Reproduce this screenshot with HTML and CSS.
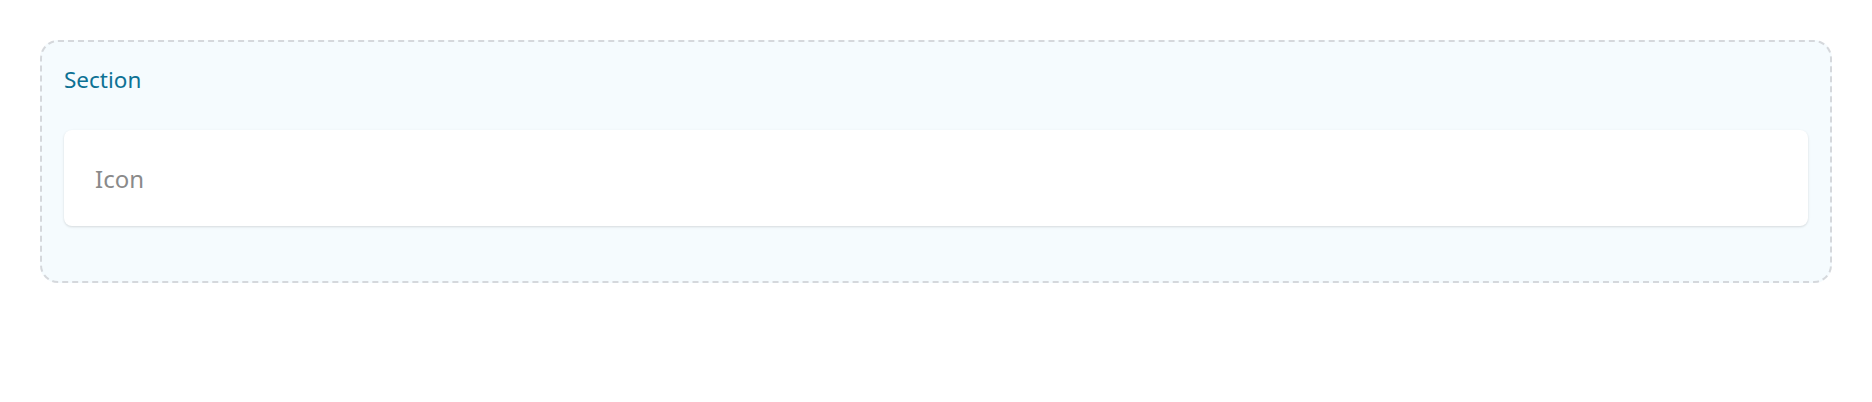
FILE: index.html
```html
<!DOCTYPE html>
<html>
<head>
<meta charset="utf-8">
<link rel="stylesheet" href="styles.css">
</head>
<body>
<div class="page">
  <section class="section">
    <div class="section-title">Section</div>
    <div class="card">
      <span class="card-label">Icon</span>
    </div>
  </section>
</div>
</body>
</html>
```
FILE: styles.css
```css
html, body {
  margin: 0;
  padding: 0;
  background: #ffffff;
  font-family: "Noto Sans", "Open Sans", "DejaVu Sans", sans-serif;
}
.page {
  padding: 40px 40px;
}
.section {
  box-sizing: border-box;
  height: 243px;
  border: 2px dashed #d5d8dc;
  border-radius: 18px;
  background: #f5fbfe;
  padding: 22px 22px 0 22px;
  display: flex;
  flex-direction: column;
  gap: 34px;
}
.section-title {
  font-size: 22.5px;
  line-height: 32px;
  color: #0d7194;
}
.card {
  height: 96px;
  background: #ffffff;
  border-radius: 8px;
  box-shadow: 0 1px 3px rgba(0, 0, 0, 0.1), 0 1px 2px rgba(0, 0, 0, 0.04);
  display: flex;
  align-items: center;
  padding: 0 31px;
}
.card-label {
  font-size: 24px;
  color: #8a8a8a;
}
```
